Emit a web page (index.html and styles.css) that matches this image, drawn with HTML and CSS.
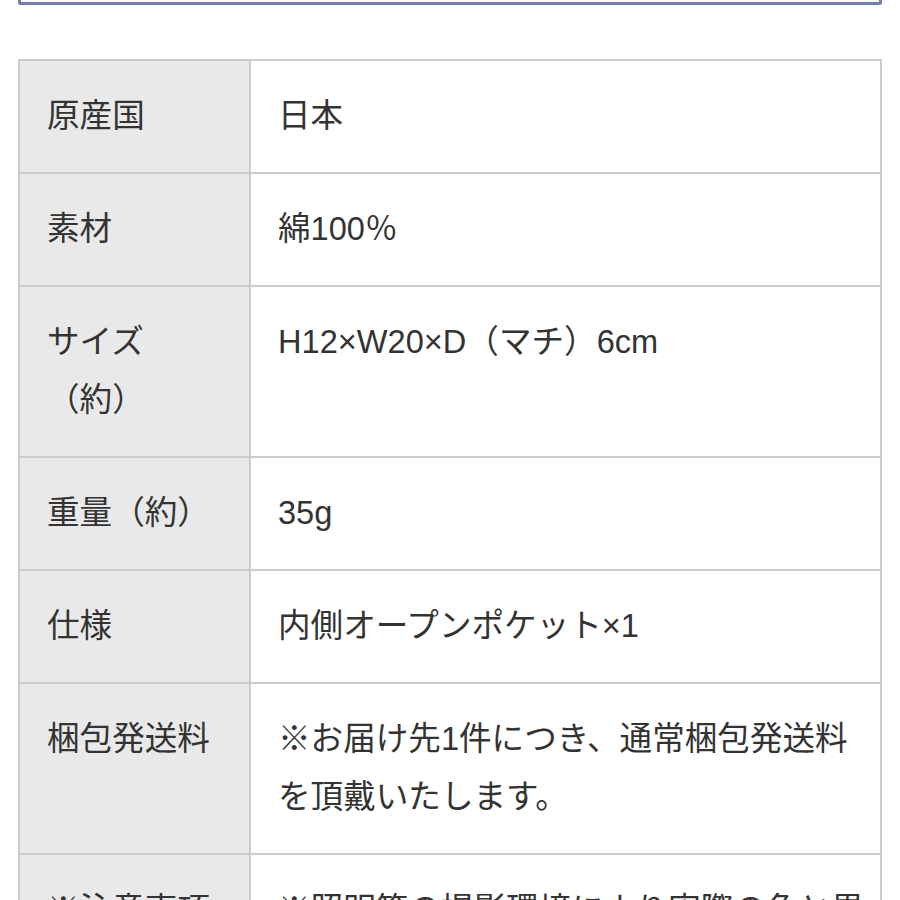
FILE: index.html
```html
<!DOCTYPE html>
<html lang="ja">
<head>
<meta charset="utf-8">
<link rel="stylesheet" href="styles.css">
</head>
<body>
<div class="topbox"></div>
<table class="spec">
  <tr><th>原産国</th><td>日本</td></tr>
  <tr><th>素材</th><td>綿100％</td></tr>
  <tr><th>サイズ<br>（約）</th><td>H12×W20×D（マチ）6cm</td></tr>
  <tr><th>重量（約）</th><td>35g</td></tr>
  <tr><th>仕様</th><td>内側オープンポケット×1</td></tr>
  <tr><th>梱包発送料</th><td>※お届け先1件につき、通常梱包発送料<br>を頂戴いたします。</td></tr>
  <tr><th>※注意事項</th><td>※照明等の撮影環境により実際の色と異なる場合があります。</td></tr>
</table>
</body>
</html>
```
FILE: styles.css
```css
html, body {
  margin: 0;
  padding: 0;
  background: #fff;
}
body {
  font-family: "Liberation Sans", "Noto Sans CJK JP", sans-serif;
  color: #333;
  overflow: hidden;
  height: 900px;
}
.topbox {
  margin: 0 18px;
  height: 2px;
  border: 3px solid #737eae;
  border-top: none;
  border-radius: 0 0 3px 3px;
  background: #f7f8fb;
}
.spec {
  margin: 54px 0 0 18px;
  width: 864px;
  border-collapse: collapse;
  border: 2px solid #cccccc;
  font-size: 32.6px;
  line-height: 58px;
}
.spec th, .spec td {
  border: 2px solid #cccccc;
  padding: 26px 6px 27px 27px;
  text-align: left;
  vertical-align: top;
  font-weight: normal;
}
.spec th {
  width: 196px;
  background: #e9e9e9;
}
```
